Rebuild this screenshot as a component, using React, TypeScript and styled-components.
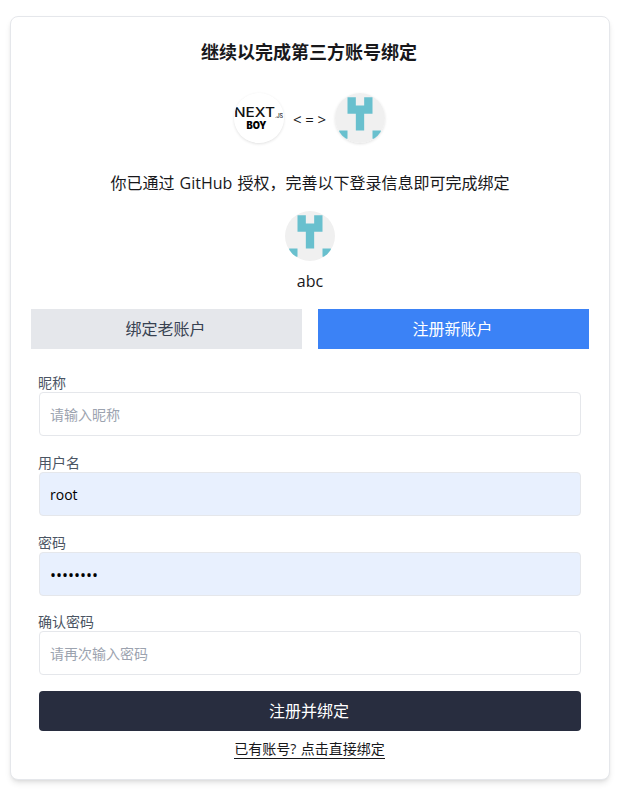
import React from 'react';
import styled, { createGlobalStyle, css } from 'styled-components';

const GlobalStyle = createGlobalStyle`
  *, *::before, *::after { box-sizing: border-box; }
  body {
    margin: 0;
    background: #fff;
    color: #18181b;
    font-family: "Open Sans", "Noto Sans CJK SC", sans-serif;
    font-size: 16px;
    line-height: 24px;
  }
`;

const Page = styled.main`
  display: flex;
  padding: 16px 8px 14px 10px;
`;

const Card = styled.section`
  display: flex;
  flex-direction: column;
  align-items: stretch;
  width: 600px;
  height: 764px;
  padding: 20px;
  border: 1px solid #e5e7eb;
  border-radius: 8px;
  background: #fff;
  box-shadow: 0 4px 6px -1px rgba(0, 0, 0, 0.1), 0 2px 4px -2px rgba(0, 0, 0, 0.1);
`;

const Title = styled.h1`
  margin: 0 0 28px;
  height: 28px;
  padding-right: 2px;
  font-size: 18px;
  font-weight: 700;
  line-height: 30px;
  text-align: center;
`;

const LinkedAccounts = styled.div`
  display: flex;
  align-items: center;
  justify-content: center;
  height: 50px;
  padding-right: 1px;
`;

const Arrow = styled.span`
  display: flex;
  justify-content: space-between;
  width: 51px;
  padding: 2px 9px 0;
  font-size: 15px;
`;

const Circle = styled.svg<{ $raised?: boolean }>`
  display: block;
  width: 50px;
  height: 50px;
  border-radius: 50%;
  ${({ $raised }) => $raised && css`box-shadow: 0 1px 3px rgba(0, 0, 0, 0.12);`}
`;

const Hint = styled.p`
  margin: 28px 0 16px;
  height: 24px;
  text-align: center;
  white-space: nowrap;
  word-spacing: 1px;
`;

const Profile = styled.div`
  display: flex;
  flex-direction: column;
  align-items: center;
  gap: 8px;
`;

const Tabs = styled.div`
  display: grid;
  grid-template-columns: 1fr 1fr;
  gap: 16px;
  margin-top: 16px;
`;

const Tab = styled.button<{ $active?: boolean }>`
  height: 40px;
  padding: 0 2px 0 0;
  border: 0;
  font: inherit;
  color: ${({ $active }) => ($active ? '#fff' : '#374151')};
  background: ${({ $active }) => ($active ? '#3b82f6' : '#e5e7eb')};
`;

const Form = styled.form`
  display: flex;
  flex-direction: column;
  padding: 24px 8px 0;
`;

const Field = styled.label`
  display: flex;
  flex-direction: column;
  height: 80px;
  &:nth-of-type(n + 3) { height: 79px; }
`;

const Label = styled.span`
  height: 19px;
  font-size: 14px;
  line-height: 20px;
  text-indent: -1px;
  color: #4b5563;
`;

const Input = styled.input<{ $filled?: boolean }>`
  width: 100%;
  height: 44px;
  padding: 1px 10px 0;
  border: 1px solid #e5e7eb;
  border-radius: 4px;
  outline: none;
  background: ${({ $filled }) => ($filled ? '#e8f0fe' : '#fff')};
  color: #000;
  font: 14px "Open Sans", "Noto Sans CJK SC", sans-serif;
  &::placeholder { color: #9ca3af; opacity: 1; }
  &[type='password']:not(:placeholder-shown) { font-size: 16px; }
`;

const Submit = styled.button`
  height: 40px;
  padding: 0 2px 0 0;
  border: 0;
  border-radius: 4px;
  background: #282d3f;
  color: #fff;
  font: inherit;
`;

const Switch = styled.a`
  align-self: center;
  margin: 8px 1px 0 0;
  height: 20px;
  border-bottom: 1px solid #18181b;
  font-size: 14px;
  line-height: 20px;
  word-spacing: 1px;
  white-space: nowrap;
`;

const Logo = () => (
  <Circle $raised viewBox="0 0 50 50" role="img" aria-label="Next.js Boy">
    <circle cx="25" cy="25" r="25" fill="#fff" />
    <text x="0" y="24.3" fontFamily="Inter" fontSize="13.5" fontWeight="500" textLength="41" lengthAdjust="spacingAndGlyphs" fill="#111">NEXT</text>
    <text x="41" y="24.5" fontFamily="Inter" fontSize="5.5" fontWeight="600" textLength="8" fill="#444">.JS</text>
    <text x="12.5" y="35.5" fontFamily="Inter" fontSize="9.8" fontWeight="900" textLength="20" lengthAdjust="spacingAndGlyphs" fill="#000">BOY</text>
  </Circle>
);

const Avatar = ({ raised }: { raised?: boolean }) => (
  <Circle $raised={raised} viewBox="0 0 420 420" aria-hidden="true">
    <rect width="420" height="420" fill="#f0f0f0" />
    <path
      fill="#69c0ce"
      d="M105 35h70v70h70V35h70v140h-70v140h-70V175h-70zM35 315h70v70H35zM315 315h70v70h-70z"
    />
  </Circle>
);

const fields = [
  { label: '昵称', type: 'text', placeholder: '请输入昵称', value: '' },
  { label: '用户名', type: 'text', placeholder: '请输入用户名', value: 'root' },
  { label: '密码', type: 'password', placeholder: '请输入密码', value: 'password' },
  { label: '确认密码', type: 'password', placeholder: '请再次输入密码', value: '' },
];

export default function App() {
  return (
    <>
      <GlobalStyle />
      <Page>
        <Card>
          <Title>继续以完成第三方账号绑定</Title>
          <LinkedAccounts>
            <Logo />
            <Arrow>
              <span>&lt;</span>
              <span>=</span>
              <span>&gt;</span>
            </Arrow>
            <Avatar raised />
          </LinkedAccounts>
          <Hint>你已通过 GitHub 授权，完善以下登录信息即可完成绑定</Hint>
          <Profile>
            <Avatar />
            <span>abc</span>
          </Profile>
          <Tabs>
            <Tab type="button">绑定老账户</Tab>
            <Tab type="button" $active>注册新账户</Tab>
          </Tabs>
          <Form>
            {fields.map((f) => (
              <Field key={f.label}>
                <Label>{f.label}</Label>
                <Input type={f.type} placeholder={f.placeholder} defaultValue={f.value} $filled={f.value !== ''} />
              </Field>
            ))}
            <Submit type="button">注册并绑定</Submit>
            <Switch>已有账号? 点击直接绑定</Switch>
          </Form>
        </Card>
      </Page>
    </>
  );
}
